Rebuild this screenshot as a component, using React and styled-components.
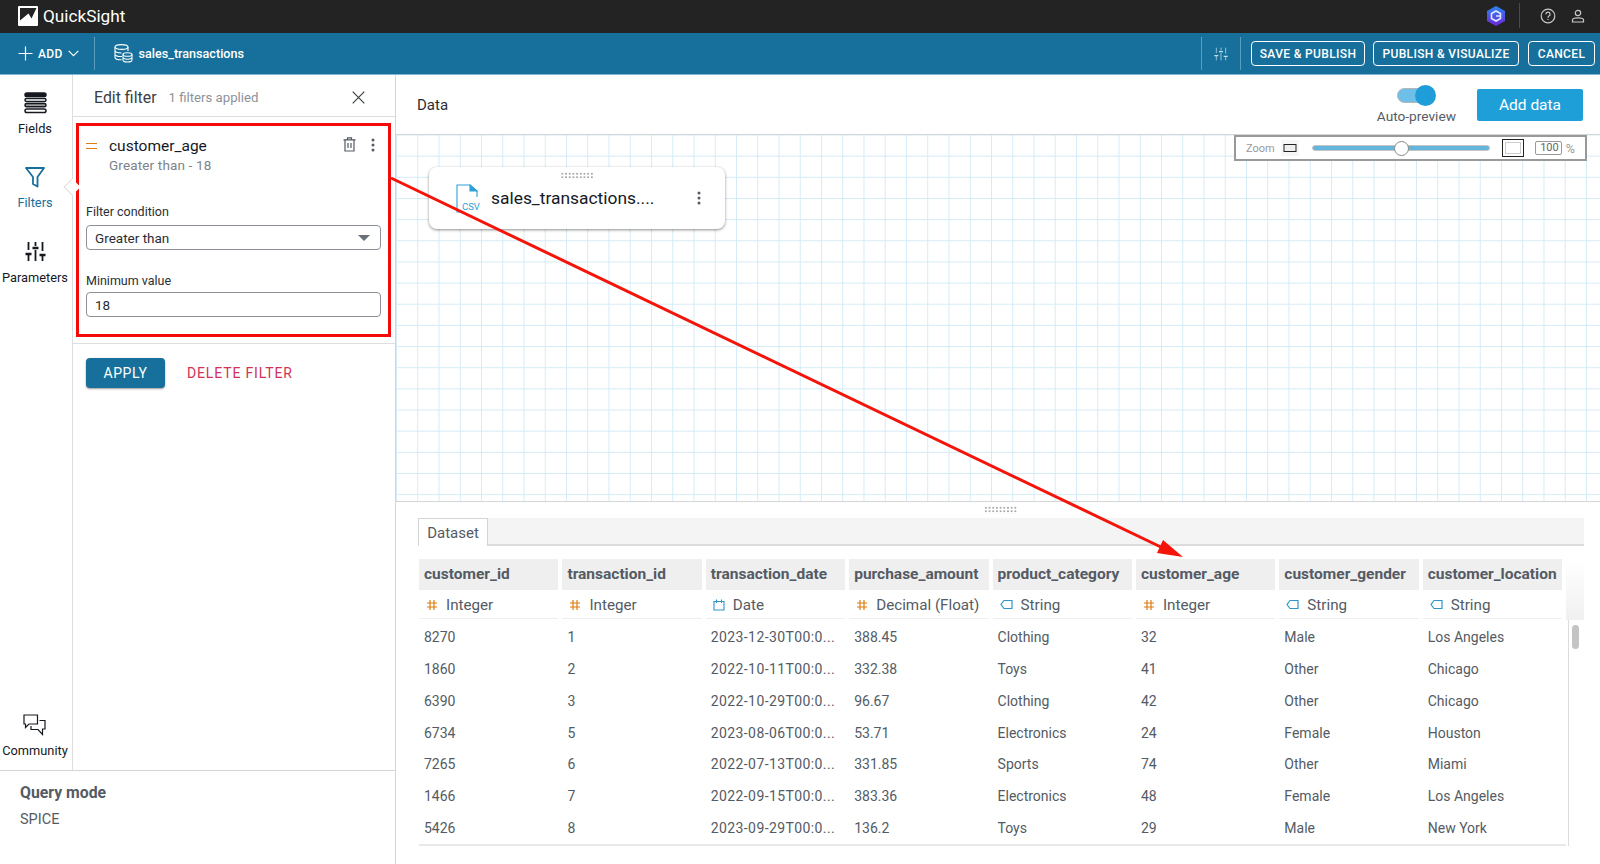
import styled, { createGlobalStyle } from 'styled-components';

const GlobalStyle = createGlobalStyle`
    * { box-sizing: border-box; }
    html, body { margin: 0; padding: 0; background: white; }
    body { font-family: Roboto, "Liberation Sans", sans-serif; color: #16191f; }
`;

const Page = styled.div`
    position: relative;
    width: 1600px;
    height: 864px;
    overflow: hidden;
    display: flex;
    flex-direction: column;
`;

const TopBar = styled.header`
    height: 33px;
    background: #232323;
    display: flex;
    align-items: center;
    padding: 0 15px 2px 18px;
    color: white;
`;

const Brand = styled.div`
    margin-left: 5px;
    font-size: 17.2px;
`;

const TopRight = styled.div`
    margin-left: auto;
    display: flex;
    align-items: center;
    gap: 15px;
`;

const TopDivider = styled.span`
    width: 1px;
    height: 25px;
    background: #4a4a4a;
    margin: 0 5px 0 -2px;
`;

const ActionBar = styled.div`
    height: 42px;
    background: #16709b;
    border-bottom: 1px solid #7fb6d0;
    display: flex;
    align-items: center;
    color: white;
    padding-left: 18px;
`;

const AddLabel = styled.span`
    font-size: 12px;
    font-weight: 500;
    margin: 0 5px 0 5px;
    letter-spacing: 0.3px;
`;

const BarDivider = styled.span`
    width: 1px;
    height: 33px;
    background: #5b9dbd;
    margin: ${({$margin}) => $margin || '0'};
`;

const DatasetName = styled.span`
    font-size: 12.6px;
    font-weight: 500;
    margin-left: 6px;
`;

const BarRight = styled.div`
    margin-left: auto;
    display: flex;
    align-items: center;
    padding-right: 5px;
`;

const BarIcon = styled.span`
    display: flex;
    margin: 0 12px;
    color: #bfe0ee;
`;

const OutlineButton = styled.button`
    height: 25px;
    width: ${({$width}) => $width}px;
    margin-left: ${({$gap}) => $gap}px;
    border: 1px solid white;
    border-radius: 4px;
    background: transparent;
    color: white;
    font: 500 12px Roboto, sans-serif;
    letter-spacing: 0.35px;
    padding: 0;
`;

const Body = styled.div`
    flex: 1;
    display: flex;
    min-height: 0;
`;

const LeftColumn = styled.aside`
    width: 396px;
    flex-shrink: 0;
    border-right: 1px solid #d5d5d5;
    display: flex;
    flex-direction: column;
`;

const LeftTop = styled.div`
    flex: 1;
    display: flex;
    min-height: 0;
    border-bottom: 1px solid #d5d5d5;
`;

const Rail = styled.nav`
    width: 73px;
    flex-shrink: 0;
    border-right: 1px solid #dedede;
    display: flex;
    flex-direction: column;
    align-items: center;
    padding: 17px 2px 12px 0;
`;

const RailItem = styled.div`
    display: flex;
    flex-direction: column;
    align-items: center;
    gap: ${({$gap}) => $gap || 7}px;
    margin-bottom: ${({$after}) => $after || 0}px;
    margin-top: ${({$auto}) => $auto ? 'auto' : 0};
    color: ${({$active}) => $active ? '#16709b' : '#16191f'};
    font-size: 12.8px;
    line-height: 15px;
`;

const FilterPanel = styled.section`
    flex: 1;
    display: flex;
    flex-direction: column;
    position: relative;
`;

const RailCaret = styled.span`
    position: absolute;
    left: -7px;
    top: 106px;
    width: 12px;
    height: 12px;
    background: white;
    border-left: 1px solid #dedede;
    border-bottom: 1px solid #dedede;
    transform: rotate(45deg);
`;

const PanelHeader = styled.div`
    height: 42px;
    flex-shrink: 0;
    display: flex;
    align-items: center;
    padding: 4px 30px 0 21px;
    border-bottom: 1px solid #dedede;
`;

const PanelTitle = styled.span`
    font-size: 15.9px;
    color: #3c4043;
`;

const PanelHint = styled.span`
    font-size: 13.2px;
    color: #8d9299;
    margin-left: 12px;
`;

const CloseButton = styled.span`
    margin-left: auto;
    display: flex;
`;

const FilterCard = styled.div`
    margin: 6px 4px 0 3px;
    height: 214px;
    border: 3px solid #f40a0a;
    padding: 10px 7px 0 7px;
`;

const CardHead = styled.div`
    display: flex;
    align-items: flex-start;
`;

const DragMark = styled.span`
    width: 11px;
    height: 6px;
    margin: 7px 12px 0 0;
    border-top: 1.5px solid #e07b0f;
    border-bottom: 1.5px solid #e07b0f;
`;

const FieldName = styled.div`
    font-size: 15.5px;
    line-height: 20px;
`;

const FieldSummary = styled.div`
    font-size: 13.5px;
    line-height: 17px;
    letter-spacing: 0.15px;
    color: #7d8389;
    margin-top: 1px;
`;

const CardTools = styled.div`
    margin-left: auto;
    display: flex;
    align-items: center;
    gap: 15px;
    padding: 1px 6px 0 0;
`;

const FieldLabel = styled.div`
    font-size: 12.5px;
    line-height: 15px;
    margin-top: ${({$top}) => $top}px;
    margin-bottom: ${({$bottom}) => $bottom}px;
    color: #2a2e33;
`;

const InputBox = styled.div`
    height: 25px;
    border: 1px solid #8d9299;
    border-radius: 4px;
    display: flex;
    align-items: center;
    justify-content: space-between;
    padding: 0 10px 0 8px;
    font-size: 13.5px;
    color: #2a2e33;
`;

const SelectCaret = styled.span`
    width: 0;
    height: 0;
    border-left: 6px solid transparent;
    border-right: 6px solid transparent;
    border-top: 6px solid #6a7077;
`;

const ApplyRow = styled.div`
    margin-top: 6px;
    border-top: 1px solid #dedede;
    padding: 14px 0 0 13px;
    display: flex;
    align-items: center;
`;

const ApplyButton = styled.button`
    width: 79px;
    height: 30px;
    border: none;
    border-radius: 4px;
    background: #16709b;
    box-shadow: 0 1px 2px rgba(0, 0, 0, 0.4);
    color: white;
    font: 400 14px Roboto, sans-serif;
    letter-spacing: 0.6px;
    padding: 0;
`;

const DeleteLink = styled.span`
    margin-left: 22px;
    color: #d13256;
    font-size: 14px;
    letter-spacing: 0.85px;
`;

const QueryMode = styled.div`
    height: 93px;
    flex-shrink: 0;
    padding: 13px 20px 0;
`;

const QueryTitle = styled.div`
    font-size: 15.8px;
    line-height: 18px;
    font-weight: 700;
    color: #545b64;
`;

const QueryValue = styled.div`
    font-size: 14.5px;
    line-height: 18px;
    margin-top: 9px;
    color: #545b64;
`;

const Main = styled.main`
    flex: 1;
    min-width: 0;
    display: flex;
    flex-direction: column;
`;

const DataHead = styled.div`
    height: 59px;
    flex-shrink: 0;
    display: flex;
    align-items: flex-start;
    padding: 0 17px 0 21px;
`;

const DataTitle = styled.div`
    font-size: 15px;
    margin-top: 21px;
    color: #2a2e33;
`;

const PreviewToggle = styled.div`
    margin-left: auto;
    margin-top: 10px;
    display: flex;
    flex-direction: column;
    align-items: center;
    gap: 3px;
    font-size: 13.7px;
    line-height: 16px;
    color: #545b64;
`;

const ToggleTrack = styled.span`
    position: relative;
    display: block;
    width: 38px;
    height: 15px;
    margin: 3px 0 2px;
    border-radius: 8px;
    background: #6fc0e8;
    border: 1px solid #b5b5b5;
    &::after {
        content: '';
        position: absolute;
        right: -2px;
        top: -4px;
        width: 21px;
        height: 21px;
        border-radius: 50%;
        background: #1f9dd9;
    }
`;

const AddDataButton = styled.button`
    width: 106px;
    height: 32px;
    margin: 14px 0 0 21px;
    border: none;
    border-radius: 2px;
    background: #1f9fd8;
    color: white;
    font: 400 15.5px Roboto, sans-serif;
    padding: 0;
`;

const Canvas = styled.div`
    position: relative;
    height: 368px;
    flex-shrink: 0;
    border-top: 1px solid #d5d5d5;
    border-bottom: 1px solid #d5d5d5;
    padding: 32px 0 0 33px;
    background-color: white;
    background-image:
        linear-gradient(to right, #d4ebf7 1.4px, transparent 1.4px),
        linear-gradient(to bottom, #d4ebf7 1.4px, transparent 1.4px);
    background-size: 21.25px 21.16px;
    background-position: 0 -0.5px;
`;

const ZoomBar = styled.div`
    position: absolute;
    top: 0;
    right: 13px;
    width: 353px;
    height: 26px;
    background: white;
    border: 2px solid #999;
    display: flex;
    align-items: center;
    padding: 0 8px 0 10px;
    font-size: 11px;
    color: #999;
`;

const ZoomIcon = styled.span`
    display: flex;
    margin-left: 6px;
    padding: 3px 2px;
    background: #f6f6f6;
`;

const SliderTrack = styled.span`
    position: relative;
    display: block;
    width: 178px;
    height: 6px;
    margin: 0 12px 0 13px;
    border-radius: 3px;
    background: #64b5de;
    border: 1px solid #c4c4c4;
    &::after {
        content: '';
        position: absolute;
        left: 81px;
        top: -5px;
        width: 13px;
        height: 13px;
        border-radius: 50%;
        background: white;
        border: 1px solid #888;
    }
`;

const ZoomValue = styled.span`
    margin-left: 11px;
    width: 27px;
    height: 14px;
    border: 1px solid #999;
    border-radius: 2px;
    color: #666;
    line-height: 12px;
    text-align: right;
    padding-right: 2px;
    margin-right: 4px;
`;

const ZoomPercent = styled.span`
    font-size: 12.5px;
`;

const SourceCard = styled.div`
    position: relative;
    width: 296px;
    height: 62px;
    background: white;
    border-radius: 8px;
    box-shadow: 0 1px 3px rgba(0, 0, 0, 0.45);
    display: flex;
    align-items: center;
    padding: 0 24px 0 27px;
    font-size: 17.4px;
    color: #16191f;
`;

const Grip = styled.span`
    position: absolute;
    top: 5px;
    left: 50%;
    transform: translateX(-50%);
    width: 33px;
    height: 7px;
    background-image: radial-gradient(circle, #aaa 1px, transparent 1.2px);
    background-size: 3.7px 3.5px;
`;

const SourceName = styled.span`
    margin-left: 10px;
    flex: 1;
`;

const BottomPanel = styled.section`
    flex: 1;
    min-height: 0;
    padding: 0 0 0 22px;
    display: flex;
    flex-direction: column;
`;

const PanelGrip = styled(Grip)`
    position: relative;
    display: block;
    top: auto;
    left: auto;
    transform: none;
    align-self: center;
    width: 34px;
    height: 8px;
    margin: 4px 0 4px -16px;
`;

const TabBar = styled.div`
    width: 1166px;
    height: 28px;
    flex-shrink: 0;
    background: #f4f4f4;
    border-bottom: 2px solid #dcdcdc;
    display: flex;
`;

const Tab = styled.div`
    width: 70px;
    height: 28px;
    background: white;
    border: 1px solid #d5d5d5;
    border-bottom: none;
    font-size: 15px;
    line-height: 28px;
    text-align: center;
    color: #545b64;
`;

const TableWrap = styled.div`
    position: relative;
    margin-top: 13px;
    width: 1166px;
`;

const Table = styled.div`
    display: grid;
    grid-template-columns: repeat(8, 139.4px);
    column-gap: 4px;
    width: 1147px;
    margin-left: 1px;
`;

const HeadCell = styled.div`
    height: 31px;
    background: #efefef;
    padding: 0 5px;
    font-size: 15.5px;
    line-height: 30px;
    font-weight: 700;
    color: #545b64;
    white-space: nowrap;
`;

const TypeCell = styled.div`
    height: 29px;
    margin-bottom: 2px;
    border-bottom: 1px solid #efefef;
    padding: 1px 0 0 7px;
    display: flex;
    align-items: center;
    gap: 8px;
    font-size: 15.2px;
    color: #545b64;
`;

const DataCell = styled.div`
    height: 31.85px;
    padding: 0 5px;
    font-size: 14px;
    line-height: 32px;
    letter-spacing: ${({$spaced}) => $spaced ? '0.4px' : '0'};
    color: #545b64;
    white-space: nowrap;
`;

const TableEnd = styled.div`
    height: 2px;
    background: #e8e8e8;
    width: 1147px;
    margin: 0 0 0 1px;
`;

const Fade = styled.div`
    position: absolute;
    top: 0;
    right: 0;
    width: 18px;
    height: 61px;
    background: linear-gradient(to bottom, white, #f0f0f0);
`;

const ScrollGutter = styled.div`
    position: absolute;
    top: 61px;
    left: 1150px;
    width: 1px;
    height: 226px;
    background: #dcdcdc;
`;

const ScrollThumb = styled.div`
    position: absolute;
    top: 66px;
    left: 1154px;
    width: 7px;
    height: 24px;
    border-radius: 4px;
    background: #c4c4c4;
`;

const ArrowLayer = styled.svg`
    position: absolute;
    inset: 0;
    pointer-events: none;
`;

const columns = [
    ['customer_id', 'num', 'Integer'],
    ['transaction_id', 'num', 'Integer'],
    ['transaction_date', 'date', 'Date'],
    ['purchase_amount', 'num', 'Decimal (Float)'],
    ['product_category', 'tag', 'String'],
    ['customer_age', 'num', 'Integer'],
    ['customer_gender', 'tag', 'String'],
    ['customer_location', 'tag', 'String'],
];

const rows = [
    ['8270', '1', '2023-12-30T00:0...', '388.45', 'Clothing', '32', 'Male', 'Los Angeles'],
    ['1860', '2', '2022-10-11T00:0...', '332.38', 'Toys', '41', 'Other', 'Chicago'],
    ['6390', '3', '2022-10-29T00:0...', '96.67', 'Clothing', '42', 'Other', 'Chicago'],
    ['6734', '5', '2023-08-06T00:0...', '53.71', 'Electronics', '24', 'Female', 'Houston'],
    ['7265', '6', '2022-07-13T00:0...', '331.85', 'Sports', '74', 'Other', 'Miami'],
    ['1466', '7', '2022-09-15T00:0...', '383.36', 'Electronics', '48', 'Female', 'Los Angeles'],
    ['5426', '8', '2023-09-29T00:0...', '136.2', 'Toys', '29', 'Male', 'New York'],
];

const Logo = () => (
    <svg width="20" height="20" viewBox="0 0 20 20">
        <rect width="20" height="20" rx="1" fill="white" />
        <path d="M2 2 H18.5 L13.5 12.5 L10.5 7.5 L2 14.5 Z" fill="#232323" />
    </svg>
);

const HexLogo = () => (
    <svg width="20" height="22" viewBox="0 0 20 22">
        <defs>
            <linearGradient id="hexFill" x1="0" y1="0" x2="0" y2="1">
                <stop offset="0" stopColor="#2a86f2" />
                <stop offset="1" stopColor="#6f26d8" />
            </linearGradient>
        </defs>
        <path d="M10 1 L19 6 V16 L10 21 L1 16 V6 Z" fill="url(#hexFill)" />
        <path d="M10 6 L14.5 8.5 V13.5 L10 16 L5.5 13.5 V8.5 Z" fill="none" stroke="#dfe6ff" strokeWidth="1.6" />
        <path d="M10 11 L14 11" stroke="#dfe6ff" strokeWidth="1.5" />
    </svg>
);

const HelpIcon = () => (
    <svg width="16" height="16" viewBox="0 0 16 16" fill="none" stroke="#c9c9c9" strokeWidth="1.2">
        <circle cx="8" cy="8" r="6.8" />
        <path d="M5.9 6.2 A2.1 2.1 0 1 1 8.6 8.2 C8 8.5 8 9 8 9.8" />
        <path d="M8 11 V12" />
    </svg>
);

const UserIcon = () => (
    <svg width="14" height="14" viewBox="0 0 14 14" fill="none" stroke="#c9c9c9" strokeWidth="1.2">
        <circle cx="7" cy="4" r="2.7" />
        <path d="M1.5 13 V10.8 C1.5 9.5 3 8.8 7 8.8 C11 8.8 12.5 9.5 12.5 10.8 V13 Z" />
    </svg>
);

const PlusIcon = () => (
    <svg width="15" height="15" viewBox="0 0 15 15" stroke="white" strokeWidth="1.2">
        <path d="M7.5 0.5 V14.5 M0.5 7.5 H14.5" />
    </svg>
);

const ChevronIcon = () => (
    <svg width="11" height="7" viewBox="0 0 11 7" fill="none" stroke="white" strokeWidth="1.2">
        <path d="M0.7 0.8 L5.5 5.6 L10.3 0.8" />
    </svg>
);

const DatabaseIcon = () => (
    <svg width="19" height="19" viewBox="0 0 19 19" fill="none" stroke="white" strokeWidth="1.1">
        <ellipse cx="7.5" cy="3" rx="6.5" ry="2.4" />
        <path d="M1 3 V13.5 C1 15 3.5 15.8 7.5 15.8 M14 3 V7 M1 6.6 C1 8 4 9 7.5 9 M1 10.2 C1 11.6 4 12.5 8 12.5" />
        <ellipse cx="13.5" cy="10.5" rx="4.5" ry="1.8" fill="#16709b" />
        <path d="M9 10.5 V16 C9 17.2 11 18 13.5 18 C16 18 18 17.2 18 16 V10.5 M9 13.3 C9 14.5 11 15.2 13.5 15.2 C16 15.2 18 14.5 18 13.3" />
    </svg>
);

const SlidersIcon = ({size = 21, width = 1.8}) => (
    <svg width={size} height={size} viewBox="0 0 21 21" fill="none" stroke="currentColor" strokeWidth={width}>
        <path d="M3.5 1 V9 M3.5 13 V20 M10.5 1 V5 M10.5 9 V20 M17.5 1 V10 M17.5 14 V20" />
        <path d="M0.5 13 H6.5 M7.5 7 H13.5 M14.5 14 H20.5" strokeWidth={width + 0.6} />
    </svg>
);

const FieldsIcon = () => (
    <svg width="23" height="22" viewBox="0 0 23 22" fill="none" stroke="#16191f" strokeWidth="1.5">
        <rect x="1" y="1" width="21" height="3.6" rx="1.8" fill="#16191f" />
        <rect x="1" y="6.4" width="21" height="3.2" rx="1.6" />
        <rect x="1" y="11.6" width="21" height="3.2" rx="1.6" fill="#9a9a9a" />
        <rect x="1" y="17" width="21" height="3.6" rx="1.8" />
    </svg>
);

const FunnelIcon = () => (
    <svg width="20" height="21" viewBox="0 0 20 21" fill="none" stroke="#16709b" strokeWidth="1.8" strokeLinejoin="round">
        <path d="M1 1 H19 L12.5 10 V19.5 L8 17 V10 Z" />
    </svg>
);

const CommunityIcon = () => (
    <svg width="23" height="22" viewBox="0 0 23 22" fill="none" stroke="#16191f" strokeWidth="1.2">
        <path d="M1 1 H14.5 V10 H6 L2.5 13.5 V10 H1 Z" />
        <path d="M16.5 6.5 H22 V15 H19.5 V20.5 L15 15.5 H8 V12" />
    </svg>
);

const CloseIcon = () => (
    <svg width="13" height="13" viewBox="0 0 13 13" stroke="#3c4043" strokeWidth="1.2">
        <path d="M0.7 0.7 L12.3 12.3 M12.3 0.7 L0.7 12.3" />
    </svg>
);

const TrashIcon = () => (
    <svg width="13" height="15" viewBox="0 0 13 15" fill="none" stroke="#545b64" strokeWidth="1.2">
        <path d="M0.5 2.8 H12.5 M4.5 2.8 V0.8 H8.5 V2.8" />
        <path d="M2 2.8 V14 H11 V2.8" />
        <path d="M5 6 V11 M8 6 V11" />
    </svg>
);

const DotsIcon = () => (
    <svg width="4" height="14" viewBox="0 0 4 14" fill="#545b64">
        <circle cx="2" cy="2" r="1.5" />
        <circle cx="2" cy="7" r="1.5" />
        <circle cx="2" cy="12" r="1.5" />
    </svg>
);

const CsvIcon = () => (
    <svg width="25" height="29" viewBox="0 0 25 29" fill="none" stroke="#2f9fd8" strokeWidth="1.1">
        <path d="M1 17 V1 H14 L21 7 V13 M1 17 V28 H4" />
        <path d="M14 1 V7 H21 Z" fill="#2f9fd8" />
        <text x="6" y="26" fontSize="9.5" fontFamily="Roboto, sans-serif" fill="#2f9fd8" stroke="none">CSV</text>
    </svg>
);

const TypeIcon = ({kind}) => {
    if (kind === 'num') {
        return (
            <svg width="12" height="12" viewBox="0 0 12 12" stroke="#e07b0f" strokeWidth="1.2">
                <path d="M4 1 V11 M8 1 V11 M1 4 H11 M1 8 H11" />
            </svg>
        );
    }
    if (kind === 'date') {
        return (
            <svg width="12" height="12" viewBox="0 0 12 12" fill="none" stroke="#2f95cf" strokeWidth="1.1">
                <path d="M1 2.5 H11 V11 H1 Z M3.5 0.5 V4 M8.5 0.5 V4" />
            </svg>
        );
    }
    return (
        <svg width="13" height="11" viewBox="0 0 13 11" fill="none" stroke="#2f95cf" strokeWidth="1.2">
            <path d="M12 1.5 H4 L1 5.5 L4 9.5 H12 Z" />
        </svg>
    );
};

export default function App() {
    return (
        <Page>
            <GlobalStyle />
            <TopBar>
                <Logo />
                <Brand>QuickSight</Brand>
                <TopRight>
                    <HexLogo />
                    <TopDivider />
                    <HelpIcon />
                    <UserIcon />
                </TopRight>
            </TopBar>
            <ActionBar>
                <PlusIcon />
                <AddLabel>ADD</AddLabel>
                <ChevronIcon />
                <BarDivider $margin="0 19px 0 15px" />
                <DatabaseIcon />
                <DatasetName>sales_transactions</DatasetName>
                <BarRight>
                    <BarDivider />
                    <BarIcon><SlidersIcon size={14} width={1.1} /></BarIcon>
                    <BarDivider />
                    <OutlineButton $width={114} $gap={10}>SAVE &amp; PUBLISH</OutlineButton>
                    <OutlineButton $width={146} $gap={8}>PUBLISH &amp; VISUALIZE</OutlineButton>
                    <OutlineButton $width={67} $gap={9}>CANCEL</OutlineButton>
                </BarRight>
            </ActionBar>
            <Body>
                <LeftColumn>
                    <LeftTop>
                        <Rail>
                            <RailItem $after={31}><FieldsIcon />Fields</RailItem>
                            <RailItem $after={31} $active><FunnelIcon />Filters</RailItem>
                            <RailItem $gap={8}><SlidersIcon />Parameters</RailItem>
                            <RailItem $auto><CommunityIcon />Community</RailItem>
                        </Rail>
                        <FilterPanel>
                            <RailCaret />
                            <PanelHeader>
                                <PanelTitle>Edit filter</PanelTitle>
                                <PanelHint>1 filters applied</PanelHint>
                                <CloseButton><CloseIcon /></CloseButton>
                            </PanelHeader>
                            <FilterCard>
                                <CardHead>
                                    <DragMark />
                                    <div>
                                        <FieldName>customer_age</FieldName>
                                        <FieldSummary>Greater than - 18</FieldSummary>
                                    </div>
                                    <CardTools><TrashIcon /><DotsIcon /></CardTools>
                                </CardHead>
                                <FieldLabel $top={30} $bottom={6}>Filter condition</FieldLabel>
                                <InputBox>Greater than<SelectCaret /></InputBox>
                                <FieldLabel $top={23} $bottom={4}>Minimum value</FieldLabel>
                                <InputBox>18</InputBox>
                            </FilterCard>
                            <ApplyRow>
                                <ApplyButton>APPLY</ApplyButton>
                                <DeleteLink>DELETE FILTER</DeleteLink>
                            </ApplyRow>
                        </FilterPanel>
                    </LeftTop>
                    <QueryMode>
                        <QueryTitle>Query mode</QueryTitle>
                        <QueryValue>SPICE</QueryValue>
                    </QueryMode>
                </LeftColumn>
                <Main>
                    <DataHead>
                        <DataTitle>Data</DataTitle>
                        <PreviewToggle>
                            <ToggleTrack />
                            Auto-preview
                        </PreviewToggle>
                        <AddDataButton>Add data</AddDataButton>
                    </DataHead>
                    <Canvas>
                        <ZoomBar>
                            Zoom
                            <ZoomIcon>
                                <svg width="14" height="10" viewBox="0 0 14 10" fill="#eee" stroke="#222" strokeWidth="1"><rect x="1" y="1.5" width="12" height="7" /></svg>
                            </ZoomIcon>
                            <SliderTrack />
                            <svg width="22" height="18" viewBox="0 0 22 18" fill="none" strokeWidth="1">
                                <rect x="0.5" y="0.5" width="21" height="17" stroke="#222" />
                                <rect x="3.5" y="3.5" width="15" height="11" stroke="#ccc" />
                            </svg>
                            <ZoomValue>100</ZoomValue>
                            <ZoomPercent>%</ZoomPercent>
                        </ZoomBar>
                        <SourceCard>
                            <Grip />
                            <CsvIcon />
                            <SourceName>sales_transactions....</SourceName>
                            <DotsIcon />
                        </SourceCard>
                    </Canvas>
                    <BottomPanel>
                        <PanelGrip />
                        <TabBar><Tab>Dataset</Tab></TabBar>
                        <TableWrap>
                            <Table>
                                {columns.map(([name]) => <HeadCell key={name}>{name}</HeadCell>)}
                                {columns.map(([name, kind, type]) => (
                                    <TypeCell key={name}><TypeIcon kind={kind} />{type}</TypeCell>
                                ))}
                                {rows.map((row) => row.map((value, i) => (
                                    <DataCell key={row[0] + i} $spaced={i === 2}>{value}</DataCell>
                                )))}
                            </Table>
                            <TableEnd />
                            <Fade />
                            <ScrollGutter />
                            <ScrollThumb />
                        </TableWrap>
                    </BottomPanel>
                </Main>
            </Body>
            <ArrowLayer width="1600" height="864" viewBox="0 0 1600 864">
                <path d="M391 178 L1165 549" stroke="#f5140a" strokeWidth="3" />
                <path d="M1183 557 L1157 553 L1163 540 Z" fill="#f5140a" />
            </ArrowLayer>
        </Page>
    );
}
